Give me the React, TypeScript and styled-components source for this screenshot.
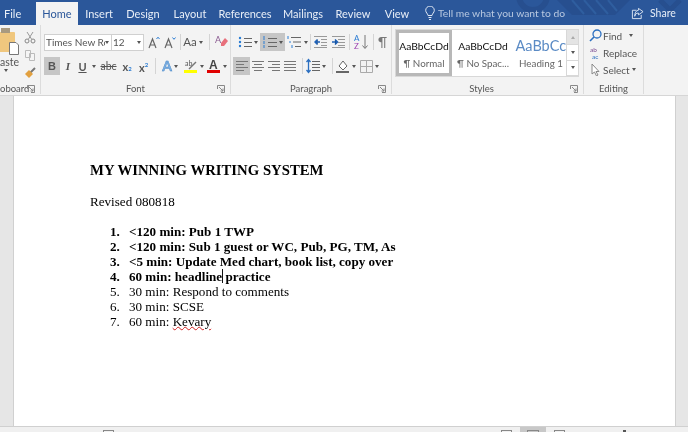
import React from 'react';
import styled, { createGlobalStyle } from 'styled-components';

const Global = createGlobalStyle`
  html, body { margin: 0; padding: 0; background: #e6e6e6; overflow: hidden; }
  #root { width: 688px; height: 432px; }
`;

const Window = styled.div`
  width: 688px; height: 432px; display: flex; flex-direction: column; overflow: hidden;
  font-family: Lato, "Open Sans", "Liberation Sans", sans-serif; filter: blur(0.4px);
`;

const TitleBar = styled.div`
  position: relative; height: 25px; background: #2b579a; display: flex; align-items: flex-end; color: #e8eef7; font-size: 11px; flex: none; overflow: hidden;
`;
const Art = styled.svg`position: absolute; left: 500px; top: 0; pointer-events: none;`;
const Tab = styled.div<{ $w: number; $active?: boolean }>`
  position: relative; width: ${p => p.$w}px; height: 23px; padding-bottom: 1px; box-sizing: border-box; display: flex; align-items: center; justify-content: center; flex: none;
  ${p => p.$active ? 'background:#f3f3f3;color:#2b579a;' : ''}
`;
const FileTab = styled(Tab)`justify-content: flex-start; padding-left: 4px;`;
const Tell = styled.div`position: relative; display: flex; align-items: center; gap: 3px; height: 23px; padding-bottom: 1px; box-sizing: border-box; margin-left: 7px; color: #b8c8e0; width: 206px; flex: none; font-size: 10.3px;`;
const Share = styled.div`position: relative; display: flex; align-items: center; gap: 6px; height: 23px; padding-bottom: 1px; box-sizing: border-box; color: #e8eef7; font-size: 10.5px;`;

const Ribbon = styled.div`height: 70px; background: #f3f3f3; border-bottom: 1px solid #d6d6d6; display: flex; flex: none; overflow: hidden;`;
const Group = styled.div<{ $w: number }>`
  width: ${p => p.$w}px; flex: none; box-sizing: border-box; height: 69px; border-right: 1px solid #dcdcdc; display: flex; flex-direction: column; position: relative;
`;
const GroupBody = styled.div`flex: 1; display: flex; flex-direction: column; min-height: 0;`;
const GroupLabel = styled.div<{ $pad?: number }>`
  height: 10px; font-size: 9.5px; line-height: 10px; text-align: center; color: #555; margin-left: ${p => p.$pad ?? 0}px; white-space: nowrap;
`;
const ClipLabel = styled(GroupLabel)`text-align: left; width: 34px; overflow: hidden; direction: rtl;`;
const Launcher = styled.svg`position: absolute; right: 5px; bottom: 1px;`;
const Row = styled.div<{ $top: number; $left: number }>`
  display: flex; align-items: center; height: 18px; margin-top: ${p => p.$top}px; margin-left: ${p => p.$left}px; flex: none;
`;
const Btn = styled.div<{ $w: number; $on?: boolean; $ml?: number }>`
  width: ${p => p.$w}px; height: 18px; margin-left: ${p => p.$ml ?? 0}px; flex: none; display: flex; align-items: center; justify-content: center; gap: 2px;
  background: ${p => p.$on ? '#c6c6c6' : 'transparent'}; color: #444; font-size: 11px;
`;
const Sep = styled.div<{ $ml: number }>`width: 1px; height: 16px; background: #d4d4d4; margin-left: ${p => p.$ml}px; flex: none;`;
const FontBox = styled.div<{ $w: number }>`
  width: ${p => p.$w}px; height: 17px; box-sizing: border-box; background: #fff; border: 1px solid #d0d0d0; display: flex; align-items: center; padding: 0 2px 0 1px; font-size: 10px; color: #555; overflow: hidden; white-space: nowrap; flex: none; margin-right: -1px;
`;
const BoxText = styled.span`flex: 1; overflow: hidden;`;
const Caret = styled.span<{ $ml?: number; $up?: boolean; $dim?: boolean }>`
  display: inline-block; width: 0; height: 0; border-left: 2.5px solid transparent; border-right: 2.5px solid transparent; border-top: 3px solid ${p => p.$dim ? '#aaa' : '#555'}; flex: none;
  margin-left: ${p => p.$ml ?? 0}px; ${p => p.$up ? 'transform: rotate(180deg);' : ''}
`;
const Glyph = styled.span<{ $f?: string; $c?: string; $b?: boolean; $i?: boolean; $s?: number; $deco?: string }>`
  font-family: ${p => p.$f ?? 'inherit'}; color: ${p => p.$c ?? '#555'}; font-weight: ${p => p.$b ? 700 : 400}; font-style: ${p => p.$i ? 'italic' : 'normal'}; font-size: ${p => p.$s ?? 12}px; line-height: 1;
  text-decoration: ${p => p.$deco ?? 'none'};
`;
const OutlineA = styled(Glyph)`-webkit-text-stroke: 0.4px #3d7fc4;`;
const Script = styled.span`font-size: 6px; color: #2b7cd3;`;

const ClipBody = styled.div`flex: 1; display: flex; position: relative;`;
const PasteCol = styled.div`width: 23px; display: flex; flex-direction: column; align-items: flex-start; flex: none; overflow: hidden; color: #555; font-size: 10.5px;`;
const PasteLabel = styled.div`line-height: 13px; white-space: nowrap; margin-top: -1px;`;
const ClipIcons = styled.div`display: flex; flex-direction: column; gap: 5px; padding-top: 6px; padding-left: 1px;`;

const StylesBox = styled.div`
  margin: 4px 0 0 3px; width: 184px; height: 48px; display: flex; background: #e6e6e6; box-sizing: border-box; border: 1px solid #d8d8d8; flex: none;
`;
const Gallery = styled.div`flex: 1; display: flex; background: #fff; overflow: hidden;`;
const StyleCard = styled.div<{ $w: number; $on?: boolean }>`
  width: ${p => p.$w}px; box-sizing: border-box; flex: none; height: 46px; overflow: hidden; display: flex; flex-direction: column; align-items: center; padding-top: ${p => p.$on ? 4 : 7}px; white-space: nowrap;
  border: ${p => p.$on ? '3px solid #b8b8b8' : '0'};
`;
const StylePreview = styled.div<{ $big?: boolean }>`
  font-size: ${p => p.$big ? 14.5 : 10.3}px; color: ${p => p.$big ? '#5b8bc5' : '#111'}; height: 18px; line-height: 18px; width: 100%; text-align: ${p => p.$big ? 'left' : 'center'}; overflow: hidden; padding-left: ${p => p.$big ? 3 : 0}px;
`;
const StyleName = styled.div`font-size: 9.8px; color: #666; margin-top: 2px;`;
const ScrollCol = styled.div`width: 11px; flex: none; display: flex; flex-direction: column; border-left: 1px solid #d8d8d8; background: #fff;`;
const ScrollBtn = styled.div<{ $dim?: boolean }>`
  flex: 1; display: flex; align-items: center; justify-content: center; background: ${p => p.$dim ? '#e4e4e4' : '#fff'}; border-bottom: 1px solid #d8d8d8;
`;
const EditItem = styled.div`display: flex; align-items: center; height: 17px; gap: 1px; font-size: 10px; color: #555; padding-left: 5px;`;
const EditBody = styled.div`padding-top: 2px; display: flex; flex-direction: column; flex: 1;`;

const Main = styled.div`flex: 1; display: flex; background: #e6e6e6; min-height: 0;`;
const Page = styled.div`
  margin-left: 13px; background: #fff; border-left: 1px solid #d0d0d0; border-right: 1px solid #d0d0d0; padding: 66px 0 0 76px;
  font-family: "Liberation Serif", "Times New Roman", serif; color: #000; font-size: 13.1px; line-height: 15px; width: 585px; flex: none;
`;
const Heading = styled.div`font-weight: 700; font-size: 14.74px; line-height: 17px; margin-bottom: 15px;`;
const Para = styled.div`height: 30px;`;
const List = styled.div`display: flex; flex-direction: column;`;
const Item = styled.div<{ $b?: boolean }>`display: flex; height: 15px; font-weight: ${p => p.$b ? 700 : 400}; white-space: nowrap;`;
const Num = styled.span`width: 39px; text-align: left; padding-left: 20px; box-sizing: border-box; flex: none;`;
const Cursor = styled.span`display: inline-block; width: 0; height: 14px; border-left: 1px solid #111; vertical-align: -2px; margin-right: -1px;`;
const Wavy = styled.span`text-decoration: underline wavy #d02020 1px; text-underline-offset: 0px;`;

const Status = styled.div`height: 5px; background: #f0f0f0; border-top: 1px solid #d0d0d0; display: flex; flex: none; overflow: hidden;`;
const StatusHighlight = styled.div<{ $ml: number }>`
  margin-left: ${p => p.$ml}px; width: 26px; height: 5px; flex: none; box-sizing: border-box; background: #c8c8c8; padding-left: 7px;
`;
const StatusIcon = styled.div<{ $ml: number; $w: number }>`
  margin: 3px 0 0 ${p => p.$ml}px; width: ${p => p.$w}px; height: 6px; flex: none; box-sizing: border-box; border: 1px solid #888;
`;
const StatusThumb = styled.div<{ $ml: number }>`margin: 3px 0 0 ${p => p.$ml}px; width: 3px; height: 3px; background: #555; flex: none;`;

const I = ({ w = 16, h = 16, children }: { w?: number; h?: number; children: React.ReactNode }) => (
  <svg width={w} height={h} viewBox={`0 0 ${w} ${h}`} fill="none">{children}</svg>
);
const Lines = ({ c = '#666', ys = [4, 8, 12], x1 = 6, x2 = 15 }: { c?: string; ys?: number[]; x1?: number; x2?: number }) => (
  <>{ys.map(y => <line key={y} x1={x1} x2={x2} y1={y + .5} y2={y + .5} stroke={c} />)}</>
);
const LauncherIcon = () => (
  <Launcher width="8" height="8" viewBox="0 0 8 8" fill="none"><path d="M.5 4V.5H7.5V7.5H4M2 2L6 6M6 3.5V6H3.5" stroke="#888" /></Launcher>
);

const Align = ({ rows }: { rows: [number, number][] }) => (
  <I w={14} h={14}>{rows.map(([a, b], i) => <line key={i} x1={a} x2={b} y1={2.5 + i * 3} y2={2.5 + i * 3} stroke="#777" />)}</I>
);

const items: [string, string, boolean][] = [
  ['1.', '<120 min: Pub 1 TWP', true],
  ['2.', '<120 min: Sub 1 guest or WC, Pub, PG, TM, As', true],
  ['3.', '<5 min: Update Med chart, book list, copy over', true],
];

export default function App() {
  return (
    <Window>
      <Global />
      <TitleBar>
        <Art width="188" height="25" viewBox="0 0 188 25" fill="none">
          <circle cx="33" cy="-4" r="14" stroke="#274f8f" strokeWidth="6" />
          <path d="M57 0H130L115 15H72Z" fill="#274f8f" />
          <path d="M72 0L84 14M84 0L96 14M96 0L108 14M108 0L117 11" stroke="#2f5e9f" strokeWidth="2" />
          <path d="M160 0L170 10L180 0" stroke="#274f8f" strokeWidth="5" />
        </Art>
        <FileTab $w={36}>File</FileTab>
        <Tab $w={42} $active>Home</Tab>
        <Tab $w={42}>Insert</Tab>
        <Tab $w={46}>Design</Tab>
        <Tab $w={48}>Layout</Tab>
        <Tab $w={62}>References</Tab>
        <Tab $w={54}>Mailings</Tab>
        <Tab $w={46}>Review</Tab>
        <Tab $w={42}>View</Tab>
        <Tell>
          <svg width="10" height="15" viewBox="0 0 10 15" fill="none"><path d="M3 9.5C2.7 7.5 .7 6.6 .7 4.4A4.3 4.3 0 0 1 9.3 4.4C9.3 6.6 7.3 7.5 7 9.5ZM3.5 11.5H6.5M4 13.5H6" stroke="#dfe7f3" /></svg>
          Tell me what you want to do
        </Tell>
        <Share>
          <svg width="13" height="13" viewBox="0 0 14 13" fill="none"><path d="M6 3H1.5V12H11V8M8 1L13 4.5L8 8V6C5.5 6 4.5 7.5 4 9.5C4 6 5.5 3.2 8 3Z" stroke="#dfe7f3" /></svg>
          Share
        </Share>
      </TitleBar>

      <Ribbon>
        <Group $w={41}>
          <ClipBody>
            <PasteCol>
              <svg width="23" height="32" viewBox="0 0 23 32"><rect x="-6" y="7" width="21" height="20" rx="1" fill="#f0c77e" /><rect x="1" y="3" width="9" height="5" fill="#a99a80" /><path d="M9.5 17.5H16L18.5 20V29.5H9.5Z" fill="#fff" stroke="#777" /></svg>
              <PasteLabel>aste</PasteLabel>
              <Caret $ml={4} />
            </PasteCol>
            <ClipIcons>
              <svg width="12" height="13" viewBox="0 0 12 13" fill="none"><path d="M3 1L7.5 8M9 1L4.5 8" stroke="#999" /><circle cx="3" cy="10" r="2" stroke="#888" /><circle cx="9" cy="10" r="2" stroke="#888" /></svg>
              <svg width="12" height="13" viewBox="0 0 12 13" fill="#f5f5f5"><path d="M1.5 1.5H6.5V8.5H1.5ZM5.5 4.5H10.5V11.5H5.5Z" stroke="#bbb" /></svg>
              <svg width="12" height="12" viewBox="0 0 12 12"><path d="M6 6L11 1" stroke="#777" strokeWidth="2" /><path d="M1 7L5 3L9 7L5 11Z" fill="#e2a03f" /></svg>
            </ClipIcons>
          </ClipBody>
          <ClipLabel>oboard</ClipLabel>
          <LauncherIcon />
        </Group>

        <Group $w={190}>
          <GroupBody>
            <Row $top={8} $left={3}>
              <FontBox $w={68}><BoxText>Times New Roman</BoxText><Caret /></FontBox>
              <FontBox $w={33}><BoxText>12</BoxText><Caret /></FontBox>
              <Btn $w={16} $ml={3}><svg width="13" height="13" viewBox="0 0 13 13" fill="none"><path d="M1 12L4.5 3L8 12M2.3 9H6.7" stroke="#666" strokeWidth="1.2" /><path d="M8.5 3L10 1.2L11.5 3" stroke="#2b7cd3" /></svg></Btn>
              <Btn $w={16}><svg width="13" height="13" viewBox="0 0 13 13" fill="none"><path d="M1 12L4.5 3L8 12M2.3 9H6.7" stroke="#666" strokeWidth="1.2" /><path d="M8.5 1.5L10 3.3L11.5 1.5" stroke="#2b7cd3" /></svg></Btn>
              <Sep $ml={2} />
              <Btn $w={22} $ml={1}><Glyph $s={11.5}>Aa</Glyph><Caret /></Btn>
              <Sep $ml={5} />
              <Btn $w={17} $ml={3}><svg width="14" height="14" viewBox="0 0 14 14"><text x="0" y="8" fontSize="9" fill="#8a5a90" fontFamily="Lato">A</text><path d="M6 8L10 3L13 6L9 11H6Z" fill="#e8707c" /></svg></Btn>
            </Row>
            <Row $top={6} $left={3}>
              <Btn $w={16} $on><Glyph $b $s={11} $f='"Liberation Sans"'>B</Glyph></Btn>
              <Btn $w={16}><Glyph $b $i $s={11} $f='"Liberation Serif"'>I</Glyph></Btn>
              <Btn $w={22}><Glyph $s={11} $b $deco="underline">U</Glyph><Caret $ml={3} /></Btn>
              <Btn $w={21}><Glyph $s={10.5} $deco="line-through">abc</Glyph></Btn>
              <Btn $w={16}><Glyph $s={11} $b>x<Script>2</Script></Glyph></Btn>
              <Btn $w={17}><Glyph $s={11} $b>x<sup><Script>2</Script></sup></Glyph></Btn>
              <Sep $ml={3} />
              <Btn $w={22} $ml={3}><OutlineA $s={14} $c="#7db0e2" $b>A</OutlineA><Caret /></Btn>
              <Btn $w={23} $ml={1}><svg width="14" height="15" viewBox="0 0 14 15"><text x="1" y="7" fontSize="7" fill="#555" fontFamily="Lato">ab</text><path d="M5 10L12 3" stroke="#777" strokeWidth="1.5" /><rect x="0" y="11" width="13" height="3" fill="#ffff00" /></svg><Caret /></Btn>
              <Btn $w={23}><svg width="14" height="16" viewBox="0 0 14 16"><text x="2" y="10.5" fontSize="12" fontWeight="700" fill="#444" fontFamily="Liberation Sans">A</text><rect x="0" y="12" width="13" height="3" fill="#e00000" /></svg><Caret /></Btn>
            </Row>
          </GroupBody>
          <GroupLabel>Font</GroupLabel>
          <LauncherIcon />
        </Group>

        <Group $w={161}>
          <GroupBody>
            <Row $top={8} $left={5}>
              <Btn $w={24}><svg width="14" height="14" viewBox="0 0 14 14"><circle cx="2" cy="3" r="1.2" fill="#2b7cd3" /><circle cx="2" cy="7" r="1.2" fill="#2b7cd3" /><circle cx="2" cy="11" r="1.2" fill="#2b7cd3" /><Lines ys={[3, 7, 11]} /></svg><Caret /></Btn>
              <Btn $w={25} $on><svg width="15" height="14" viewBox="0 0 15 14"><path d="M2 1V5M2 6V9M2 10V13" stroke="#2b7cd3" /><Lines ys={[3, 7, 11]} /></svg><Caret /></Btn>
              <Btn $w={24}><svg width="15" height="14" viewBox="0 0 15 14"><path d="M1 1V4M3 6V8M5 10V13" stroke="#2b7cd3" /><path d="M4 2.5H14M6 7H14M8 11.5H14" stroke="#666" /></svg><Caret /></Btn>
              <Sep $ml={1} />
              <Btn $w={16} $ml={2}><svg width="14" height="14" viewBox="0 0 14 14"><path d="M0 1.5H13M7 4.5H13M7 7.5H13M7 10.5H13M0 12.5H13" stroke="#999" /><path d="M6 7H1.5M3.5 4.5L1 7L3.5 9.5" stroke="#1f62b8" strokeWidth="1.5" /></svg></Btn>
              <Btn $w={17}><svg width="14" height="14" viewBox="0 0 14 14"><path d="M1 1.5H14M7 4.5H14M7 7.5H14M7 10.5H14M1 12.5H14" stroke="#999" /><path d="M1 7H6M4 4.5L6.5 7L4 9.5" stroke="#1f62b8" strokeWidth="1.5" /></svg></Btn>
              <Sep $ml={3} />
              <Btn $w={20} $ml={1}><svg width="15" height="16" viewBox="0 0 15 16" fill="none"><text x="0" y="7" fontSize="8" fill="#2b7cd3" fontFamily="Lato">A</text><text x="0" y="15" fontSize="8" fill="#9b3fb0" fontFamily="Lato">Z</text><path d="M11 1V14M8.5 11.5L11 14.5L13.5 11.5" stroke="#777" /></svg></Btn>
              <Sep $ml={2} />
              <Btn $w={17}><Glyph $s={13} $c="#777">¶</Glyph></Btn>
            </Row>
            <Row $top={6} $left={2}>
              <Btn $w={17} $on><Align rows={[[1, 13], [1, 9], [1, 13], [1, 9]]} /></Btn>
              <Btn $w={16}><Align rows={[[1, 13], [3, 11], [1, 13], [3, 11]]} /></Btn>
              <Btn $w={16}><Align rows={[[1, 13], [5, 13], [1, 13], [5, 13]]} /></Btn>
              <Btn $w={16}><Align rows={[[1, 13], [1, 13], [1, 13], [1, 13]]} /></Btn>
              <Sep $ml={4} />
              <Btn $w={24} $ml={1}><svg width="14" height="16" viewBox="0 0 14 16" fill="none"><path d="M2.5 2V14M.5 4L2.5 1.5L4.5 4M.5 12L2.5 14.5L4.5 12" stroke="#2b6fc0" strokeWidth="1.3" /><path d="M6 3.5H14M6 6.5H14M6 9.5H14M6 12.5H14" stroke="#666" /></svg><Caret /></Btn>
              <Sep $ml={4} />
              <Btn $w={23} $ml={1}><svg width="15" height="16" viewBox="0 0 15 16" fill="none"><path d="M4 8L8 3L12 8L8 12Z" fill="#fff" stroke="#666" /><path d="M1 14H14" stroke="#666" strokeWidth="2" /></svg><Caret /></Btn>
              <Btn $w={24} $ml={0}><svg width="13" height="13" viewBox="0 0 13 13" fill="none"><path d="M.5.5H12.5V12.5H.5ZM6.5.5V12.5M.5 6.5H12.5" stroke="#aaa" /></svg><Caret /></Btn>
            </Row>
          </GroupBody>
          <GroupLabel>Paragraph</GroupLabel>
          <LauncherIcon />
        </Group>

        <Group $w={192}>
          <GroupBody>
            <StylesBox>
              <Gallery>
                <StyleCard $w={56} $on><StylePreview>AaBbCcDd</StylePreview><StyleName>¶ Normal</StyleName></StyleCard>
                <StyleCard $w={62}><StylePreview>AaBbCcDd</StylePreview><StyleName>¶ No Spac...</StyleName></StyleCard>
                <StyleCard $w={54}><StylePreview $big>AaBbCc</StylePreview><StyleName>Heading 1</StyleName></StyleCard>
              </Gallery>
              <ScrollCol>
                <ScrollBtn $dim><Caret $up $dim /></ScrollBtn>
                <ScrollBtn><Caret /></ScrollBtn>
                <ScrollBtn><Caret /></ScrollBtn>
              </ScrollCol>
            </StylesBox>
          </GroupBody>
          <GroupLabel $pad={-12}>Styles</GroupLabel>
          <LauncherIcon />
        </Group>

        <Group $w={60}>
          <EditBody>
            <EditItem><svg width="13" height="13" viewBox="0 0 13 13" fill="none"><circle cx="8" cy="5" r="4" stroke="#2b6fc0" strokeWidth="1.3" /><path d="M5 8L1 12" stroke="#2b6fc0" strokeWidth="1.6" /></svg>Find<Caret $ml={6} /></EditItem>
            <EditItem><svg width="13" height="13" viewBox="0 0 13 13"><text x="1" y="6" fontSize="6.5" fill="#7a4a90" fontFamily="Lato">ab</text><text x="3" y="12.5" fontSize="6.5" fill="#2b6fc0" fontFamily="Lato">ac</text></svg>Replace</EditItem>
            <EditItem><svg width="13" height="13" viewBox="0 0 13 13" fill="none"><path d="M3 1V11L5.5 9L7.5 13L9 12L7 8.5H10Z" fill="#fff" stroke="#888" /></svg>Select<Caret $ml={1} /></EditItem>
          </EditBody>
          <GroupLabel>Editing</GroupLabel>
        </Group>
      </Ribbon>

      <Main>
        <Page>
          <Heading>MY WINNING WRITING SYSTEM</Heading>
          <Para>Revised 080818</Para>
          <List>
            {items.map(([n, t, b]) => <Item key={n} $b={b}><Num>{n}</Num>{t}</Item>)}
            <Item $b><Num>4.</Num><span>60 min: headline<Cursor /> practice</span></Item>
            <Item><Num>5.</Num>30 min: Respond to comments</Item>
            <Item><Num>6.</Num>30 min: SCSE</Item>
            <Item><Num>7.</Num><span>60 min: <Wavy>Kevary</Wavy></span></Item>
          </List>
        </Page>
      </Main>

      <Status>
        <StatusIcon $ml={103} $w={11} />
        <StatusIcon $ml={387} $w={11} />
        <StatusHighlight $ml={8}><StatusIcon $ml={0} $w={12} /></StatusHighlight>
        <StatusIcon $ml={8} $w={11} />
        <StatusThumb $ml={58} />
      </Status>
    </Window>
  );
}
